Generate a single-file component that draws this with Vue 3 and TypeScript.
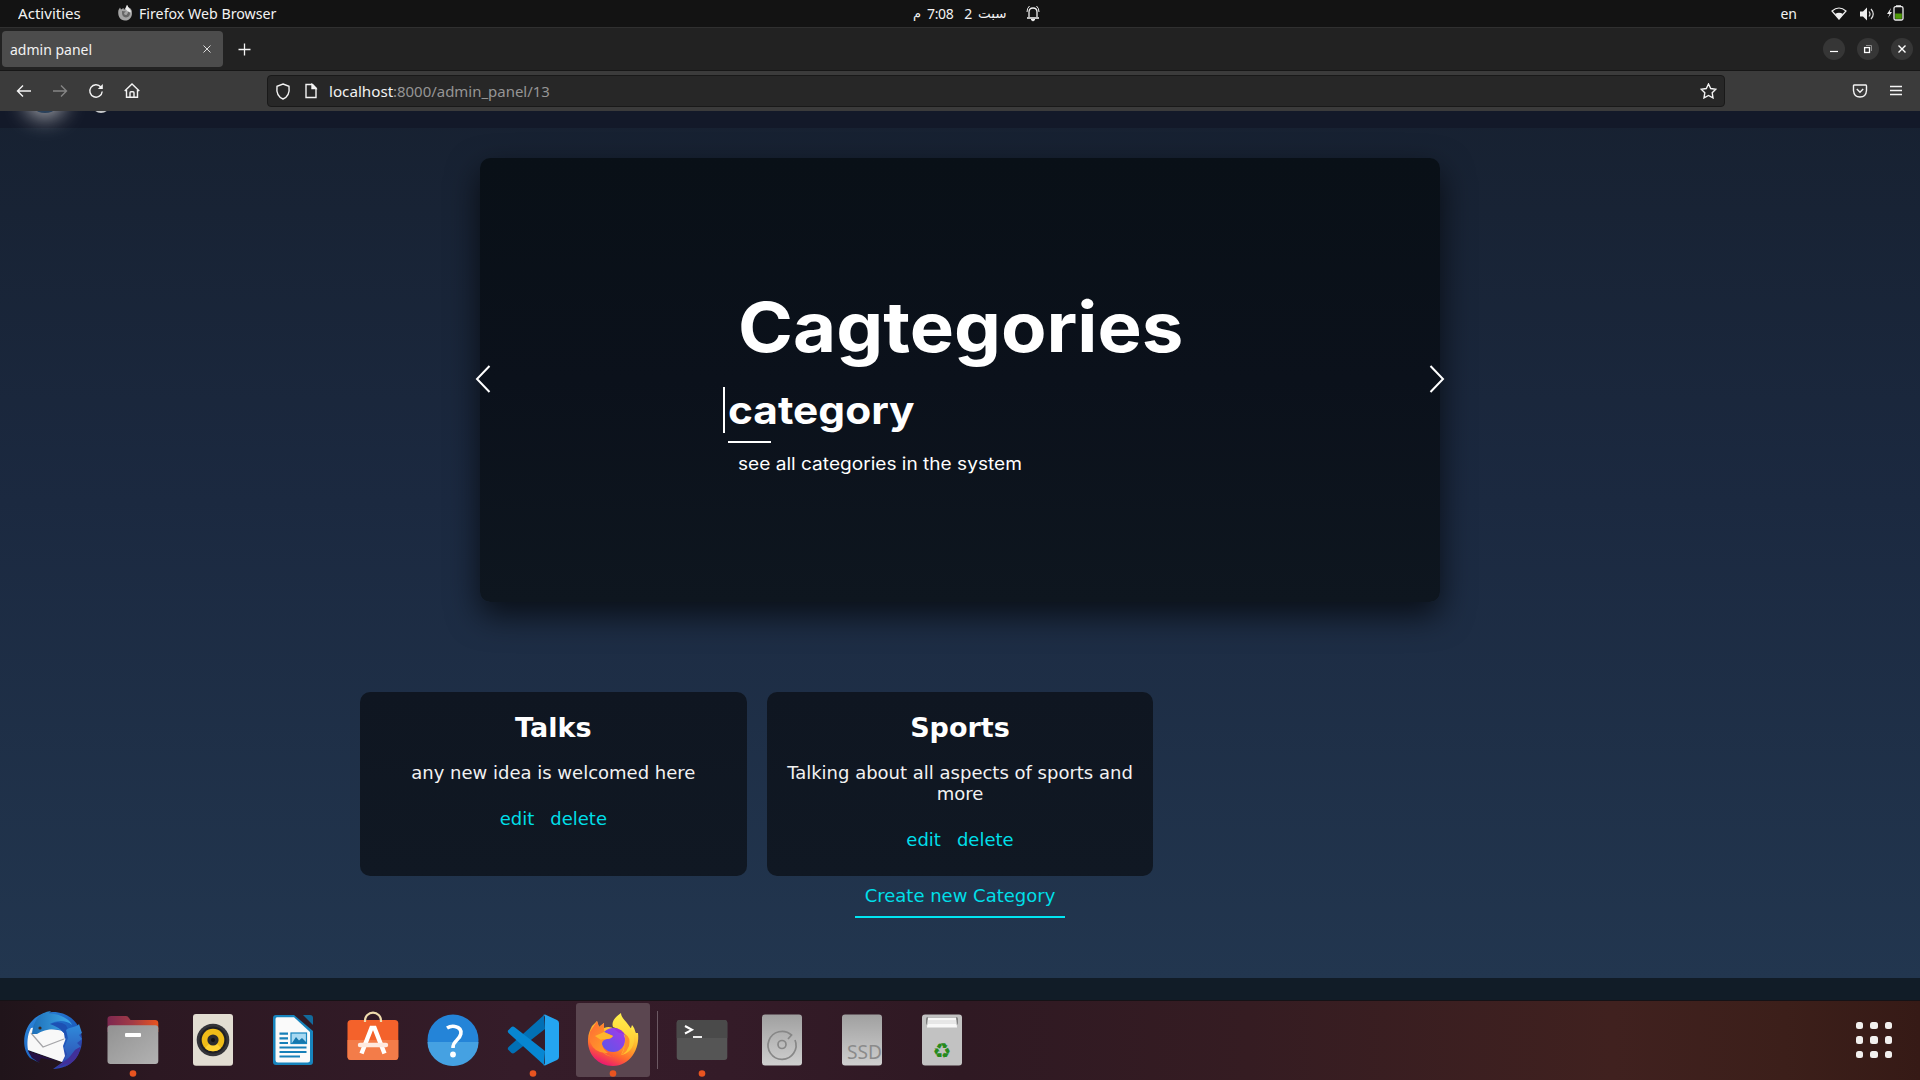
<script setup lang="ts">
interface Category {
  name: string
  description: string
}

const categories: Category[] = [
  { name: 'Talks', description: 'any new idea is welcomed here' },
  { name: 'Sports', description: 'Talking about all aspects of sports and more' },
]

// Stretches a label horizontally to a given width in pixels.
const vFit = {
  mounted(el: HTMLElement, binding: { value: number }) {
    const natural = el.offsetWidth
    el.style.transform = `scaleX(${binding.value / natural})`
    el.style.marginRight = `${binding.value - natural}px`
  },
}
</script>

<template>
  <div class="desktop">
    <header class="topbar">
      <span v-fit="62.5" class="label activities">Activities</span>
      <svg class="app-icon" width="15" height="18" viewBox="0 0 15 18">
        <path d="M.5 6 2 3.500 3 5.500 5.500 4 6 6 8 3 9 1 10 3 12.500 4.500 13.500 6C15 11 13 16.500 7 16.500 1 16.500-.5 10.500.5 6Z" fill="#a4a4a4" />
        <path d="M4 7 8 7.500 6 9Q6 11.500 8.500 11 10.500 9.500 10 6.500L12 9Q12 13 8 13.500 3.500 13 4 7" fill="#666" />
        <path d="M7.500 5 9 .8 10.500 3.500 12.500 6 13 8.500 10 7.500Z" fill="#ececec" />
      </svg>
      <span v-fit="137" class="label">Firefox Web Browser</span>
      <div class="clock" dir="ltr">
        <span class="ar">م</span><span class="time">7:08</span><span class="day">2</span><span v-fit="29" class="label ar sabt">سبت</span>
        <svg class="bell" width="14" height="18" viewBox="0 0 14 18" fill="none" stroke="#eee">
          <path d="M3 13V8Q3 4 7 4T11 8V13" stroke-width="1.3" />
          <path d="M1 14H13" stroke-width="1.6" />
          <path d="M5 15.5H9L7 17Z" fill="#eee" />
          <path d="M3.5 2Q1 4 1 8M10.5 2Q13 4 13 8" stroke-width="1" />
        </svg>
      </div>
      <div class="tray">
        <span class="label">en</span>
        <svg class="wifi" width="16" height="14" viewBox="0 0 16 14">
          <path d="M1 4Q8-2 15 4L8 12Z" fill="none" stroke="#eee" stroke-width="1.2" />
          <path d="M4 7Q8 4.500 12 7L8 12.500Z" fill="#eee" />
        </svg>
        <svg class="volume" width="15" height="14" viewBox="0 0 15 14">
          <path d="M0 4.500H3L7 .5V13.500L3 9.500H0Z" fill="#eee" />
          <path d="M9 4.500Q11 7 9 9.500M11 2Q15.500 7 11 12" fill="none" stroke="#ddd" stroke-width="1.2" />
        </svg>
        <svg class="battery" width="17" height="16" viewBox="0 0 17 16">
          <path d="M4 3 0 9H2.500L1 13 5 7H2.800Z" fill="#eee" />
          <rect x="7" y="1.700" width="9" height="13.300" rx="1.500" fill="none" stroke="#eee" stroke-width="1.300" />
          <path d="M9 1H14" stroke="#eee" stroke-width="1.500" />
          <rect x="8.200" y="8.500" width="6.600" height="5.300" fill="#4e9a06" />
        </svg>
      </div>
    </header>

    <div class="tabbar">
      <div class="tab">
        <span v-fit="82" class="label">admin panel</span>
        <svg width="8" height="8" viewBox="0 0 8 8" stroke="#ddd" stroke-width="1"><path d="M.5.5 7.500 7.500M7.500.5.5 7.500" /></svg>
      </div>
      <svg class="plus" width="13" height="13" viewBox="0 0 13 13" stroke="#f4f4f4" stroke-width="1.300"><path d="M6.500.5V12.500M.5 6.500H12.500" /></svg>
      <div class="window-controls">
        <button><svg width="22" height="22"><path d="M7 13.500H15" stroke="#fff" stroke-width="1.200" /></svg></button>
        <button>
          <svg width="22" height="22" fill="none">
            <path d="M9 7.500H14.500V13" stroke="#8c8c8c" />
            <rect x="7.600" y="9.600" width="4.900" height="4.900" stroke="#fff" stroke-width="1.300" />
          </svg>
        </button>
        <button><svg width="22" height="22"><path d="M7.500 7.500 14.500 14.500M14.500 7.500 7.500 14.500" stroke="#fff" stroke-width="1.400" /></svg></button>
      </div>
    </div>

    <nav class="navbar">
      <div class="nav-buttons">
        <svg width="16" height="16" viewBox="0 0 16 16"><path d="M15 8H1.500M7 2.500 1.500 8 7 13.500" /></svg>
        <svg class="dim" width="16" height="16" viewBox="0 0 16 16"><path d="M1 8H14.500M9 2.500 14.500 8 9 13.500" /></svg>
        <svg width="16" height="16" viewBox="0 0 16 16"><path d="M12.800 4A6.200 6.200 0 1 0 14.200 8.500" /><path d="M14.800 1V6H9.800Z" fill="#f4f4f4" stroke="none" /></svg>
        <svg width="16" height="16" viewBox="0 0 16 16"><path d="M.7 8 8 1 15.300 8M2.500 7V14.300H13.500V7M6 14V9.800Q6 8.700 7 8.700H9Q10 8.700 10 9.800V14" /></svg>
      </div>
      <div class="urlbar">
        <svg width="16" height="17" viewBox="0 0 16 17"><path d="M8 1 14 3.300C14.800 9.500 12.500 14 8 16 3.500 14 1.200 9.500 2 3.300Z" /></svg>
        <svg class="page-icon" width="14" height="16" viewBox="0 0 14 16"><path d="M2 1.500H8.500L12 5V14.500H2Z" /><path d="M8 1.500V5.500H12Z" fill="#f4f4f4" /></svg>
        <span class="url"><span v-fit="64" class="label host">localhost</span><span v-fit="157" class="label path">:8000/admin_panel/13</span></span>
        <svg class="star" width="17" height="16" viewBox="0 0 17 16"><path d="M8.500 1 10.700 5.500 15.800 6.200 12.200 9.800 13 14.900 8.500 12.500 4 14.900 4.800 9.800 1.200 6.200 6.300 5.500Z" /></svg>
      </div>
      <div class="nav-end">
        <svg width="16" height="16" viewBox="0 0 16 16"><path d="M2.200 2H13.800Q14.500 2 14.500 3V7.500Q14 14 8 14 2 14 1.500 7.500V3Q1.500 2 2.200 2ZM4.800 6 8 9.200 11.200 6" /></svg>
        <svg width="12" height="12" viewBox="0 0 12 12"><path d="M0 1.500H12M0 5.500H12M0 9.500H12" /></svg>
      </div>
    </nav>

    <main class="page">
      <div class="site-header">
        <span class="logo"></span>
        <span class="brand"></span>
      </div>
      <section class="hero">
        <svg class="arrow prev" width="16" height="28" viewBox="0 0 16 28"><path d="M14.500 1 2 14 14.500 27" /></svg>
        <div class="hero-body">
          <h1><span v-fit="445" class="label">Cagtegories</span></h1>
          <h2><span v-fit="187" class="label">category</span></h2>
          <p><span v-fit="284" class="label">see all categories in the system</span></p>
        </div>
        <svg class="arrow next" width="16" height="28" viewBox="0 0 16 28"><path d="M1.500 1 14 14 1.500 27" /></svg>
      </section>
      <section class="cards">
        <article v-for="c in categories" :key="c.name" class="card">
          <h3>{{ c.name }}</h3>
          <p>{{ c.description }}</p>
          <div class="links"><a>edit</a><a>delete</a></div>
        </article>
      </section>
      <a class="create">Create new Category</a>
    </main>
    <footer class="site-footer"></footer>

    <div class="dock">
      <!-- Thunderbird -->
      <svg class="slot" viewBox="0 0 80 80">
        <defs>
          <linearGradient id="tb" x1="0" y1="0" x2="1" y2="1"><stop offset="0" stop-color="#2f8fe0" /><stop offset=".55" stop-color="#1c5fc0" /><stop offset="1" stop-color="#3b2d9c" /></linearGradient>
          <linearGradient id="tbh" x1="0" y1="0" x2="1" y2="0"><stop offset="0" stop-color="#1e6fb8" /><stop offset="1" stop-color="#3fa9ea" /></linearGradient>
          <linearGradient id="tbw" x1="0" y1="0" x2="0" y2="1"><stop offset="0" stop-color="#2f8ddc" /><stop offset="1" stop-color="#2f4fb4" /></linearGradient>
        </defs>
        <path d="M19 21C10 30 8 48 17 58L27 63C20 59 17 55 15 50L50 62 40 69C58 69 69 55 69 40 69 25 57 12 40 12 31 12 24 15 19 21Z" fill="url(#tb)" />
        <path d="M15 51 44 61 28 58 26 62 19 58Z" fill="#241046" />
        <path d="M18 28C14 35 14 44 15 50L49 62 52 56 50 46 53 38C52 33 49 30 45 30L25 27Z" fill="#f8f8f8" />
        <path d="M18 33 30 47 51 39" fill="none" stroke="#a5a5a8" stroke-width="1.300" />
        <path d="M19 34C20 22 26 12 38 11L35 14C44 13 56 18 59 25 52 19 42 21 37 24 42 24 47 26 51 31 43 28 31 29 24 34Z" fill="url(#tbh)" />
        <path d="M37 24Q46 20 53 25 57 31 52 40L51 33Q46 27 37 24Z" fill="#1d51b4" />
        <path d="M53 30C58 26 63 28 66 24L69 33 66 35 69 39 64 43 68 47 62 50 63 56 55 58 50 62 54 54 51 48 55 38Z" fill="url(#tbw)" />
        <path d="M55 59 62 50 67 47Q66 61 51 67L56 63 43 68 50 62Z" fill="#413099" />
        <circle cx="27" cy="28" r="1.600" fill="#38281f" />
      </svg>
      <!-- Files -->
      <svg class="slot" viewBox="0 0 80 80">
        <defs>
          <linearGradient id="fo"><stop offset="0" stop-color="#7d2850" /><stop offset=".5" stop-color="#a33b45" /><stop offset="1" stop-color="#e9541f" /></linearGradient>
          <linearGradient id="fb" x1="0" y1="0" x2="1" y2="1"><stop offset="0" stop-color="#929292" /><stop offset="1" stop-color="#b2b2b2" /></linearGradient>
        </defs>
        <path d="M14.500 32V19Q14.500 16 18 16H33Q35 16 36 18L37.500 20H62Q65.300 20 65.300 23V32Z" fill="url(#fo)" />
        <rect x="14.500" y="25.200" width="50.800" height="38.800" rx="3" fill="url(#fb)" />
        <rect x="32" y="33" width="16" height="4" rx="1" fill="#fff" />
        <circle cx="40" cy="73.500" r="3.300" class="running" />
      </svg>
      <!-- Rhythmbox -->
      <svg class="slot" viewBox="0 0 80 80">
        <rect x="20" y="14" width="40" height="51.700" rx="3" fill="#e2ddd2" />
        <circle cx="40" cy="40" r="16.300" fill="#343439" />
        <circle cx="40" cy="40" r="13.500" fill="#202024" />
        <circle cx="40" cy="40" r="11.300" fill="#efbc18" />
        <path d="M40 40 48 48A11.300 11.300 0 0 1 32 48Z" fill="#ffd333" />
        <circle cx="40" cy="40" r="5.600" fill="#2b2b2e" />
        <circle cx="40" cy="40" r="2" fill="#111" />
      </svg>
      <!-- Writer -->
      <svg class="slot" viewBox="0 0 80 80">
        <path d="M23 15H41L60 31V62Q60 65 57 65H23Q20 65 20 62V18Q20 15 23 15Z" fill="#1784bd" />
        <path d="M50 15H57Q60 15 60 18V25Z" fill="#126a9c" />
        <path d="M24 17.300H41L57 32V60Q57 62.500 54.500 62.500H25Q22.500 62.500 22.500 60V19Q22.500 17.300 24 17.300Z" fill="#fafafa" />
        <rect x="38" y="33" width="15.500" height="10.500" fill="#a8d9f2" stroke="#1784bd" stroke-width="1.200" />
        <path d="M39 43 43 37 46 40.500 49 38 53 42V43Z" fill="#1677ad" />
        <path d="M26.500 33.700H35M26.500 38.400H35M26.500 43H35M26.500 47.500H53.500M26.500 52H53.500M26.500 56.500H47" stroke="#167fb8" stroke-width="2.200" />
      </svg>
      <!-- Software -->
      <svg class="slot" viewBox="0 0 80 80">
        <rect x="14.500" y="20" width="50.800" height="40" rx="3.500" fill="#f4622b" />
        <path d="M14.500 40H65.300V56.500Q65.300 60 62 60H18Q14.500 60 14.500 56.500Z" fill="#f37c49" />
        <path d="M32 22V20.500A8 7.800 0 0 1 48 20.500V22" fill="none" stroke="#f0dcae" stroke-width="2.200" />
        <path d="M28.500 53.500 38.500 28H41.500L51.500 53.500" fill="none" stroke="#fff" stroke-width="4.400" />
        <path d="M27 45H53" stroke="#ffeae0" stroke-width="4.400" stroke-linecap="round" />
      </svg>
      <!-- Help -->
      <svg class="slot" viewBox="0 0 80 80">
        <circle cx="40" cy="40" r="25.500" fill="#2484d8" />
        <path d="M14.500 42A25.500 24 0 0 0 65.500 42Z" fill="#45a1e2" />
        <path d="M34 28Q38 25.500 42 26.500 49 28 47.800 34 47 37.500 43.500 40.500 40 43.500 40 48" fill="none" stroke="#fff" stroke-width="3.600" />
        <circle cx="40" cy="54.500" r="2.900" fill="#fff" />
      </svg>
      <!-- VS Code -->
      <svg class="slot" viewBox="0 0 80 80">
        <path d="M51 15 15.500 47Q14 49 15.500 50L18.500 53Q20 54 22 52.500L52 29Z" fill="#0270b5" />
        <path d="M51 65 15.500 33Q14 31 15.500 30L18.500 27Q20 26 22 27.500L52 51Z" fill="#0787d2" />
        <path d="M50 15 52 14.500 64 20Q66 21 66 23V57Q66 59 64 60L52 65.500 50 65Q52 65 52 62V18Q52 15 50 15Z" fill="#24a5f0" />
        <circle cx="40" cy="73.500" r="3.300" class="running" />
      </svg>
      <!-- Firefox -->
      <svg class="slot" viewBox="0 0 80 80">
        <defs>
          <linearGradient id="ff" x1=".8" y1="0" x2=".3" y2="1"><stop offset="0" stop-color="#fff44f" /><stop offset=".4" stop-color="#ffb52b" /><stop offset=".7" stop-color="#ff6b2c" /><stop offset="1" stop-color="#e80f78" /></linearGradient>
          <linearGradient id="fg" x1="1" y1="0" x2="0" y2="1"><stop offset="0" stop-color="#a43ae8" /><stop offset="1" stop-color="#5a57e8" /></linearGradient>
          <linearGradient id="fh" x1="0" y1="0" x2="1" y2="1"><stop offset="0" stop-color="#ff6a35" /><stop offset="1" stop-color="#ffab25" /></linearGradient>
          <linearGradient id="fy" x1="0" y1="0" x2="0" y2="1"><stop offset="0" stop-color="#fff04c" /><stop offset="1" stop-color="#ffc02c" /></linearGradient>
        </defs>
        <rect x="3" y="3" width="74" height="74" rx="3" fill="#5b4650" />
        <path d="M19 26 24 21 26 27 31 23V28C35 26 39 27 41 29L58 28 59 25C62 28 62 32 63 33L65 33C67 49 57 66 40 66 25 66 14 54 15 39 15 34 17 30 19 26Z" fill="url(#ff)" />
        <path d="M48 13C48 20 59 24 61 37 62 48 55 54 48 55L54 42 50 31 40 27C38 22 42 17 48 13Z" fill="url(#fy)" />
        <path d="M52 34Q58 37 56 46 52 57 40 57 28 54 26 44L28 50Q34 59 46 56 53 53 52 34Z" fill="#ff8d2e" />
        <circle cx="40" cy="40" r="12" fill="url(#fg)" />
        <path d="M40 28Q50 28 53 37 49 32 46 33Z" fill="#9535dc" />
        <path d="M17 32 24 21 26 27 31 23 31 32 40 36Q38 39 34 39 29 40 29 44 30 50 35 53 22 54 17 42Z" fill="url(#fh)" />
        <path d="M22 36 31 32 40 36Q38 39 34 39 29 39 28 40Z" fill="#ffb52c" />
        <circle cx="40" cy="73.500" r="3.300" class="running" />
      </svg>
      <span class="dock-sep"></span>
      <!-- Terminal -->
      <svg class="slot" viewBox="0 0 80 80">
        <rect x="14.700" y="20" width="50.600" height="40" rx="3" fill="#555" />
        <path d="M14.700 38V23Q14.700 20 18 20H62Q65.300 20 65.300 23V38Z" fill="#4a4a4a" />
        <path d="M23 26 30 29.800 23 33.500" fill="none" stroke="#fff" stroke-width="2" />
        <path d="M31 37H40" stroke="#fff" stroke-width="1.800" />
        <circle cx="40" cy="73.500" r="3.300" class="running" />
      </svg>
      <!-- Disk -->
      <svg class="slot" viewBox="0 0 80 80">
        <defs><linearGradient id="dk" x1="0" y1="0" x2="0" y2="1"><stop offset="0" stop-color="#a0a0a0" /><stop offset="1" stop-color="#cfcfcf" /></linearGradient></defs>
        <rect x="20" y="14.500" width="40" height="51" rx="3" fill="url(#dk)" />
        <g fill="none" stroke="#878787" stroke-width="1.700">
          <path d="M46 39 49.500 35A14 14 0 1 0 53 40" />
          <circle cx="40" cy="44.500" r="4" />
        </g>
      </svg>
      <!-- SSD -->
      <svg class="slot" viewBox="0 0 80 80">
        <rect x="20" y="14.500" width="40" height="51" rx="3" fill="url(#dk)" />
        <text x="25" y="58.500" class="ssd" textLength="35" lengthAdjust="spacingAndGlyphs">SSD</text>
      </svg>
      <!-- Trash -->
      <svg class="slot" viewBox="0 0 80 80">
        <rect x="20" y="14.500" width="40" height="51" rx="3" fill="#c2c2c2" />
        <rect x="24" y="17" width="32" height="8" rx="2" fill="#808080" />
        <path d="M26 17.500H54L55 27.500H25Z" fill="#f8f8f8" />
        <path d="M25.500 21H54.500M25 23H55" stroke="#ccc" stroke-width=".8" />
        <text x="40" y="57.500" class="recycle" text-anchor="middle">♻</text>
      </svg>
      <div class="apps"><i v-for="n in 9" :key="n"></i></div>
    </div>
  </div>
</template>

<style>
body {
  margin: 0;
  overflow: hidden;
  background: #111;
}
</style>

<style scoped>
.desktop {
  width: 1920px;
  height: 1080px;
  display: flex;
  flex-direction: column;
  overflow: hidden;
  font-family: "Noto Sans", sans-serif;
  font-size: 14px;
  color: #f2f2f2;
}
.label {
  display: inline-block;
  white-space: nowrap;
  transform-origin: left center;
}
.topbar {
  position: relative;
  box-sizing: border-box;
  height: 27px;
  flex: none;
  display: flex;
  align-items: center;
  padding: 0 16px 0 18px;
  background: #131313;
}
.app-icon {
  margin: -2px 6px 0 37.5px;
}
.clock {
  position: absolute;
  left: 913px;
  top: 0;
  height: 26px;
  display: flex;
  align-items: center;
}
.ar {
  font-family: "DejaVu Sans", sans-serif;
  font-size: 13px;
}
.clock .time {
  margin-left: 6px;
  letter-spacing: -0.4px;
}
.clock .day {
  margin-left: 11px;
}
.clock .sabt {
  margin-left: 6px;
}
.clock .bell {
  position: absolute;
  left: 113px;
  top: 4px;
}
.tray {
  margin-left: auto;
  display: flex;
  align-items: center;
}
.wifi {
  margin-left: 34px;
}
.volume {
  margin-left: 13px;
}
.battery {
  margin: -2px 0 0 12px;
}
.tabbar {
  box-sizing: border-box;
  height: 44px;
  flex: none;
  display: flex;
  align-items: center;
  padding: 0 7px 0 2px;
  background: #222;
  border-top: 1px solid #303030;
  border-bottom: 1px solid #171717;
}
.tab {
  box-sizing: border-box;
  width: 221px;
  height: 36px;
  display: flex;
  align-items: center;
  justify-content: space-between;
  padding: 0 12px 0 8px;
  border-radius: 4px;
  background: #4c4c4c;
}
.plus {
  margin: 1px 0 0 15px;
}
.window-controls {
  margin-left: auto;
  display: flex;
  gap: 12px;
}
.window-controls button {
  width: 22px;
  height: 22px;
  padding: 0;
  border: 0;
  border-radius: 50%;
  background: #363636;
}
.window-controls svg {
  display: block;
}
.navbar {
  box-sizing: border-box;
  height: 40px;
  flex: none;
  display: flex;
  align-items: center;
  padding: 0 18px 0 16px;
  background: #3b3b3b;
}
.navbar svg {
  fill: none;
  stroke: #f4f4f4;
  stroke-width: 1.4;
  flex: none;
}
.nav-buttons {
  display: flex;
  gap: 20px;
  width: 251px;
}
.navbar .dim {
  stroke: #858585;
}
.urlbar {
  box-sizing: border-box;
  width: 1458px;
  height: 32px;
  display: flex;
  align-items: center;
  padding: 0 7px;
  border: 1px solid #191919;
  border-radius: 4px;
  background: #272727;
}
.page-icon {
  margin: 0 11px 0 13px;
}
.url {
  display: flex;
}
.path {
  color: #959595;
}
.star {
  margin-left: auto;
}
.nav-end {
  margin-left: auto;
  display: flex;
  align-items: center;
  gap: 22px;
}
.page {
  height: 867px;
  flex: none;
  display: flex;
  flex-direction: column;
  overflow: hidden;
  font-family: "DejaVu Sans", sans-serif;
  font-size: 18px;
  background: linear-gradient(#172131, #1b2940 45%, #22364f);
}
.site-header {
  height: 17px;
  flex: none;
  display: flex;
  background: #131929;
}
.logo {
  width: 36px;
  height: 36px;
  margin: -34px 0 0 27px;
  border-radius: 50%;
  background: #29405a;
  box-shadow: 0 4px 22px 1px rgba(255, 255, 255, 0.7);
}
.brand {
  width: 18px;
  height: 18px;
  margin: -16px 0 0 29px;
  border-radius: 50%;
  background: #c8cacc;
}
.hero {
  position: relative;
  box-sizing: border-box;
  width: 960px;
  height: 444px;
  flex: none;
  margin: 30px auto 0;
  border-radius: 10px;
  background: linear-gradient(#091017, #0b111b 50%, #0e161f);
  box-shadow: 0 13px 32px rgba(0, 0, 0, 0.66);
  font-family: Inter, sans-serif;
  color: #fff;
}
.hero-body {
  padding: 127px 0 0 243px;
}
.hero h1 {
  margin: 0 0 0 15px;
  font-size: 69px;
  line-height: 84px;
  font-weight: 700;
}
.hero h2 {
  position: relative;
  width: 188px;
  margin: 18px 0 0;
  padding-left: 3px;
  border-left: 2px solid #fff;
  font-size: 39px;
  line-height: 46px;
  font-weight: 700;
}
.hero h2::after {
  content: "";
  position: absolute;
  left: 3px;
  bottom: -10px;
  width: 43px;
  height: 2px;
  background: #fff;
}
.hero p {
  margin: 20px 0 0 14.5px;
  font-size: 17px;
  line-height: 22px;
}
.arrow {
  position: absolute;
  top: 207px;
  fill: none;
  stroke: #fff;
  stroke-width: 2;
}
.prev {
  left: -5px;
}
.next {
  right: -5px;
}
.cards {
  width: 1200px;
  margin: 90px auto 0;
  display: grid;
  grid-template-columns: repeat(3, 1fr);
  gap: 20px;
}
.card {
  box-sizing: border-box;
  height: 184px;
  padding: 20px;
  border-radius: 10px;
  background: linear-gradient(#0f1621, #101823);
  text-align: center;
}
.card h3 {
  margin: 0;
  font-size: 27px;
  line-height: 31px;
  color: #fff;
}
.card p {
  margin: 20.4px 0 0;
  line-height: 20.4px;
}
.links {
  margin-top: 24.4px;
  line-height: 21px;
  display: flex;
  justify-content: center;
  gap: 16px;
}
.links a,
.create {
  color: #00dfe8;
}
.create {
  align-self: center;
  margin-top: 9px;
  padding: 0 10px 9px;
  line-height: 22px;
  border-bottom: 2px solid #00e5f2;
}
.site-footer {
  height: 22px;
  flex: none;
  background: #111c27;
}
.dock {
  height: 80px;
  flex: none;
  display: flex;
  align-items: center;
  padding: 0 28px 0 13px;
  box-sizing: border-box;
  box-shadow: inset 0 1px #151216;
  background: linear-gradient(90deg, #20141a, #2c1822 8%, #351c29 27%, #341b28 38%, #2f1923 50%, #351c22 65%, #40211f 84%, #3c1f1a 93%, #361a16);
}
.slot {
  width: 80px;
  height: 80px;
  flex: none;
}
.running {
  fill: #e95420;
}
.dock-sep {
  width: 1px;
  height: 58px;
  margin: 0 4px;
  background: #6c5963;
}
.ssd {
  font: 19px "Noto Sans", sans-serif;
  fill: #8b8b8b;
}
.recycle {
  font: 21px "DejaVu Sans", sans-serif;
  fill: #268a1c;
}
.apps {
  margin-left: auto;
  display: grid;
  grid-template-columns: repeat(3, 7.5px);
  gap: 7px;
}
.apps i {
  height: 7.5px;
  border-radius: 2.5px;
  background: #f2f0ee;
}
</style>
